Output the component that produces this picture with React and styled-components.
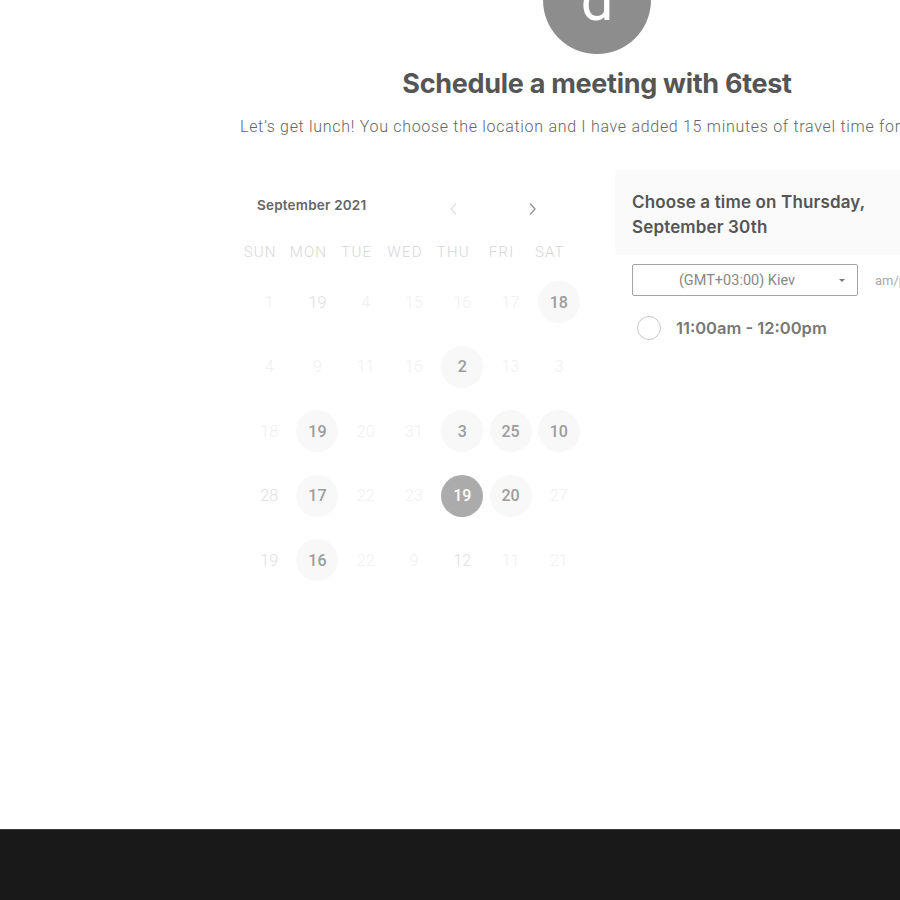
import React from "react";
import styled, { createGlobalStyle } from "styled-components";

const Global = createGlobalStyle`
  html, body { margin: 0; padding: 0; background: #fff; }
  body { overflow: hidden; font-family: Roboto, "Liberation Sans", sans-serif; }
`;

const Page = styled.div`
  width: 900px;
  height: 900px;
  display: flex;
  flex-direction: column;
  overflow: hidden;
`;

const Main = styled.main`
  flex: 1;
  overflow: hidden;
`;

const Container = styled.div`
  margin-left: 240px;
  width: 714px;
  display: flex;
  flex-direction: column;
  align-items: center;
`;

const Avatar = styled.div`
  margin-top: -54px;
  width: 108px;
  height: 108px;
  border-radius: 50%;
  background: #8d8d8d;
  color: #fff;
  display: flex;
  align-items: center;
  justify-content: center;
  font-family: Roboto, sans-serif;
  font-size: 58px;
  font-weight: 400;
  line-height: 1;
`;

const Title = styled.h1`
  margin: 14px 0 0;
  font-family: Inter, "Liberation Sans", sans-serif;
  font-size: 27px;
  line-height: 32px;
  font-weight: 700;
  color: #555;
  letter-spacing: -0.3px;
`;

const Subtitle = styled.p`
  margin: 17px 0 0;
  align-self: flex-start;
  white-space: nowrap;
  font-family: Roboto, sans-serif;
  font-weight: 300;
  font-size: 16px;
  line-height: 20px;
  letter-spacing: 0.7px;
  color: #666;
`;

const Body = styled.div`
  align-self: stretch;
  margin-top: 33px;
  display: flex;
  gap: 32px;
`;

const Calendar = styled.section`
  margin-left: 5px;
  width: 338px;
`;

const MonthBar = styled.div`
  display: flex;
  align-items: center;
  padding-top: 25px;
  height: 20px;
`;

const MonthLabel = styled.div`
  margin-left: 12px;
  width: 188px;
  font-family: Inter, sans-serif;
  font-size: 13.5px;
  font-weight: 600;
  letter-spacing: 0.2px;
  color: #666;
`;

const NavBtn = styled.span`
  display: flex;
  align-items: center;
  justify-content: center;
  width: 16px;
  margin-top: 8px;
  margin-left: ${(p) => p.$ml}px;
  svg { display: block; }
`;

const DayHeads = styled.div`
  margin: 27px 9px 0 -9px;
  display: grid;
  grid-template-columns: repeat(7, minmax(0, 1fr));
  height: 20px;
`;

const DayHead = styled.div`
  display: flex;
  justify-content: center;
  font-family: Roboto, sans-serif;
  font-size: 15px;
  font-weight: 300;
  line-height: 20px;
  letter-spacing: 1.2px;
  color: #d6d6d6;
  white-space: nowrap;
`;

const Grid = styled.div`
  margin-top: 8px;
  display: grid;
  grid-template-columns: repeat(7, minmax(0, 1fr));
  grid-auto-rows: 64.5px;
`;

const Cell = styled.div`
  display: flex;
  align-items: center;
  justify-content: center;
`;

const dayColor = {
  sel: "#fff",
  on: "#9c9c9c",
  dim: "#dedede",
  off: "#f0f0f0",
};

const Day = styled.div`
  width: 42px;
  height: 42px;
  border-radius: 50%;
  display: flex;
  align-items: center;
  justify-content: center;
  font-family: Roboto, sans-serif;
  font-size: 16px;
  font-weight: ${(p) => (p.$state === "on" || p.$state === "sel" ? 500 : 300)};
  color: ${(p) => dayColor[p.$state]};
  background: ${(p) =>
    p.$state === "sel" ? "#ababab" : p.$state === "on" ? "#f8f8f8" : "transparent"};
`;

const TimePanel = styled.section`
  flex: 1;
`;

const PanelHead = styled.div`
  background: #fafafa;
  padding: 20px 17px 15px;
  font-family: Inter, "Liberation Sans", sans-serif;
  font-size: 17px;
  line-height: 25px;
  font-weight: 600;
  letter-spacing: 0.15px;
  color: #555;
  white-space: nowrap;
`;

const PanelBody = styled.div`
  padding: 9px 0 0 17px;
`;

const TzRow = styled.div`
  display: flex;
  align-items: center;
  gap: 17px;
`;

const Select = styled.div`
  box-sizing: border-box;
  width: 226px;
  height: 32px;
  padding-right: 16px;
  border: 1px solid #a5a5a5;
  border-radius: 2px;
  display: flex;
  align-items: center;
  justify-content: center;
  position: relative;
  font-family: Roboto, sans-serif;
  font-size: 14.5px;
  color: #888;
`;

const Caret = styled.span`
  position: absolute;
  right: 12px;
  top: 14px;
  width: 0;
  height: 0;
  border-left: 3px solid transparent;
  border-right: 3px solid transparent;
  border-top: 3px solid #777;
`;

const AmPm = styled.span`
  font-family: Roboto, sans-serif;
  font-size: 13px;
  color: #aaa;
  white-space: nowrap;
`;

const Slot = styled.div`
  margin-top: 20px;
  margin-left: 5px;
  display: flex;
  align-items: center;
  gap: 15px;
`;

const Radio = styled.span`
  box-sizing: border-box;
  width: 24px;
  height: 24px;
  border-radius: 50%;
  border: 1px solid #c8c8c8;
`;

const SlotText = styled.span`
  font-family: Inter, "Liberation Sans", sans-serif;
  font-size: 16.5px;
  font-weight: 600;
  color: #777;
`;

const Footer = styled.footer`
  height: 70px;
  background: #191919;
  border-top: 1px solid #3a3a3a;
`;

const heads = ["SUN", "MON", "TUE", "WED", "THU", "FRI", "SAT"];

const rows = [
  [["1", "off"], ["19", "dim"], ["4", "off"], ["15", "off"], ["16", "off"], ["17", "off"], ["18", "on"]],
  [["4", "off"], ["9", "off"], ["11", "off"], ["16", "off"], ["2", "on"], ["13", "off"], ["3", "off"]],
  [["18", "off"], ["19", "on"], ["20", "off"], ["31", "off"], ["3", "on"], ["25", "on"], ["10", "on"]],
  [["28", "dim"], ["17", "on"], ["22", "off"], ["23", "off"], ["19", "sel"], ["20", "on"], ["27", "off"]],
  [["19", "dim"], ["16", "on"], ["22", "off"], ["9", "off"], ["12", "dim"], ["11", "off"], ["21", "off"]],
];

export default function App() {
  return (
    <Page>
      <Global />
      <Main>
        <Container>
          <Avatar>d</Avatar>
          <Title>Schedule a meeting with 6test</Title>
          <Subtitle>
            Let’s get lunch! You choose the location and I have added 15 minutes of travel time for you
          </Subtitle>
          <Body>
            <Calendar>
              <MonthBar>
                <MonthLabel>September 2021</MonthLabel>
                <NavBtn $ml={0}>
                  <svg width="9" height="14" viewBox="0 0 9 14">
                    <path d="M7 1.5 L2 7 L7 12.5" fill="none" stroke="#e2e2e2" strokeWidth="1.5" />
                  </svg>
                </NavBtn>
                <NavBtn $ml={63}>
                  <svg width="9" height="14" viewBox="0 0 9 14">
                    <path d="M2 1.5 L7 7 L2 12.5" fill="none" stroke="#9a9a9a" strokeWidth="1.5" />
                  </svg>
                </NavBtn>
              </MonthBar>
              <DayHeads>
                {heads.map((h) => (
                  <DayHead key={h}>{h}</DayHead>
                ))}
              </DayHeads>
              <Grid>
                {rows.flat().map(([n, s], i) => (
                  <Cell key={i}>
                    <Day $state={s}>{n}</Day>
                  </Cell>
                ))}
              </Grid>
            </Calendar>
            <TimePanel>
              <PanelHead>
                Choose a time on Thursday,
                <br />
                September 30th
              </PanelHead>
              <PanelBody>
                <TzRow>
                  <Select>
                    (GMT+03:00) Kiev
                    <Caret />
                  </Select>
                  <AmPm>am/pm</AmPm>
                </TzRow>
                <Slot>
                  <Radio />
                  <SlotText>11:00am - 12:00pm</SlotText>
                </Slot>
              </PanelBody>
            </TimePanel>
          </Body>
        </Container>
      </Main>
      <Footer />
    </Page>
  );
}
